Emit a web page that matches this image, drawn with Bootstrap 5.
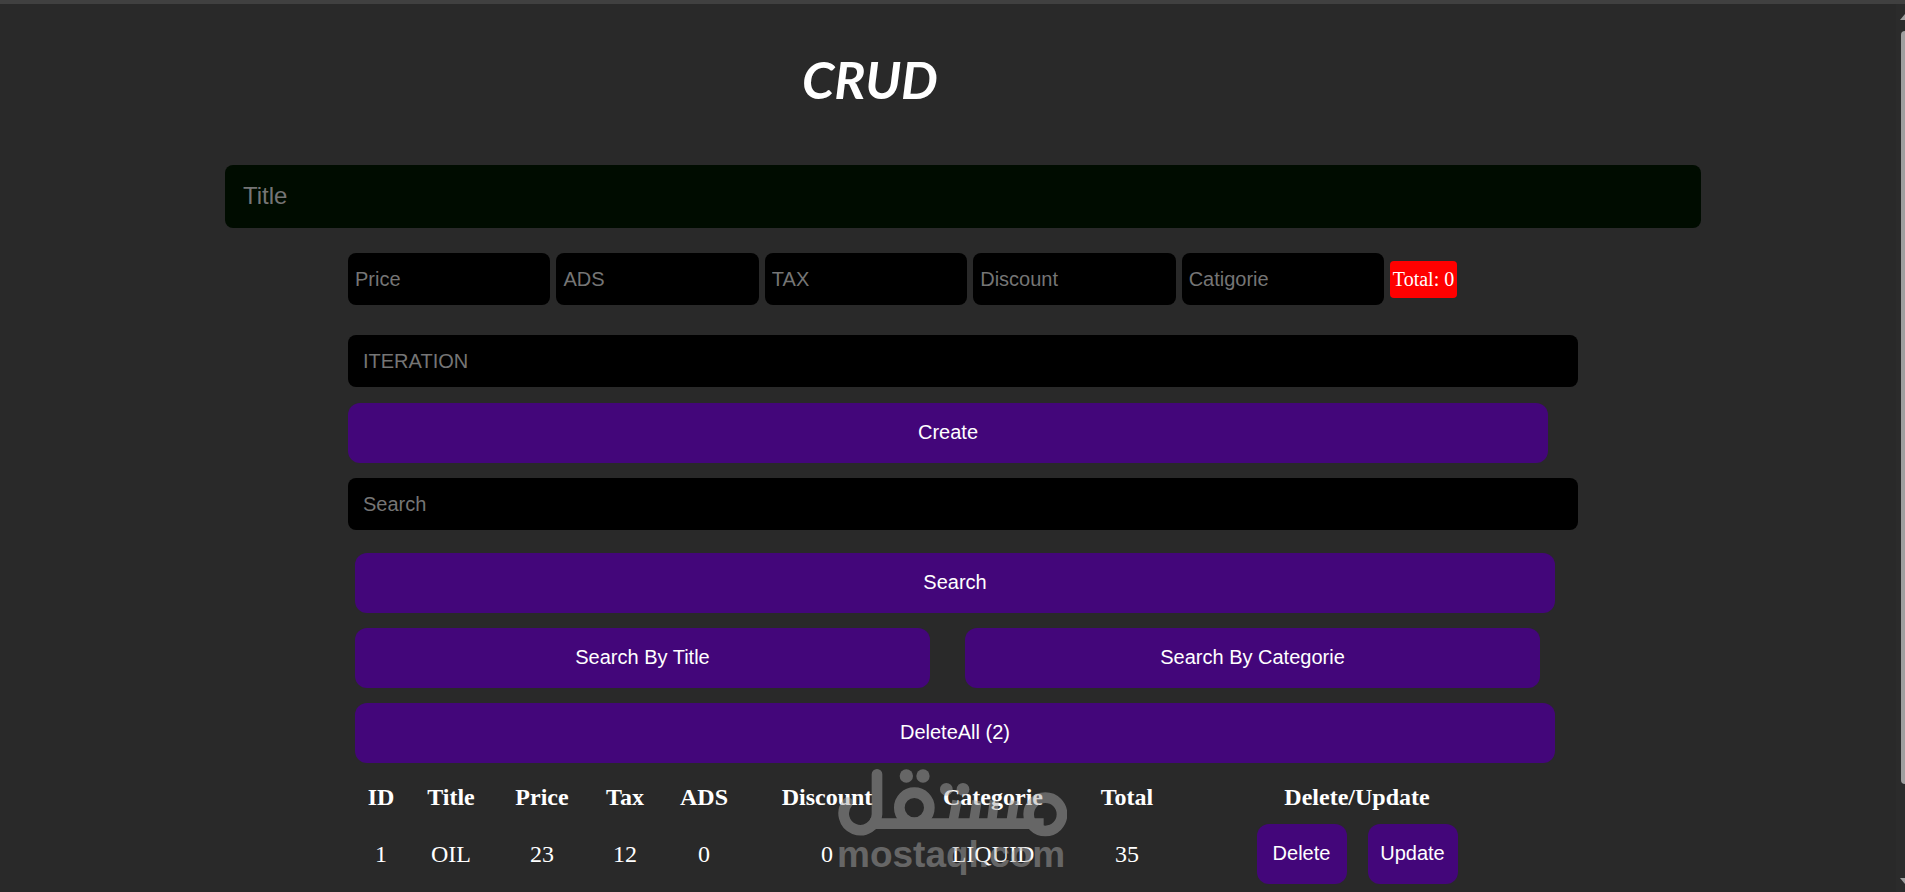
<!DOCTYPE html>
<html lang="en">
<head>
<meta charset="utf-8">
<meta name="viewport" content="width=device-width, initial-scale=1">
<title>CRUD</title>
<link href="https://cdn.jsdelivr.net/npm/bootstrap@5.3.0/dist/css/bootstrap.min.css" rel="stylesheet">
<script src="https://cdn.jsdelivr.net/npm/bootstrap@5.3.0/dist/js/bootstrap.bundle.min.js"></script>
<style>
  body { background: #292929; color: #fff; font-family: "Liberation Serif", serif; font-size: 20px; }
  .top-edge { height: 4px; background: #404040; }
  .page { padding-right: 9px; }
  .app { width: 100%; max-width: 1200px; }
  .app-title { font: italic 700 52px/68px Lato, sans-serif; padding: 41px 156px 52px 0; }
  .field { background: #000; color: #fff; border: 0; border-radius: 8px; font: 20px/24px "Liberation Sans", sans-serif; padding: 14px 7px; box-shadow: none; }
  .field:focus { background: #000; color: #fff; box-shadow: none; }
  .field::placeholder { color: #757575; opacity: 1; }
  .field-title, .field-title:focus { background: #000c00; }
  .field-title { font-size: 24px; line-height: 27px; padding: 17px 18px 19px; width: calc(100% + 276px); margin: 0 -153px 25px -123px; }
  .field-wide { width: calc(100% + 30px); padding: 14px 15px; }
  .prices { gap: 6px; margin-bottom: 30px; padding-right: 91px; }
  .prices .field { flex: 1 1 0; min-width: 0; }
  .total { background: #f00; border-radius: 4px; width: 67px; text-align: center; padding: 3px 0 4px; line-height: 30px; }
  .btn-main, .btn-main:hover { background: #43067a; color: #fff; }
  .btn-main { border: 0; border-radius: 12px; font: 20px/24px "Liberation Sans", sans-serif; padding: 17px 0 19px; }
  .create { margin: 16px 0 15px; }
  .searches { margin: 23px -7px 0 7px; gap: 15px; }
  .halves { gap: 35px; padding-right: 15px; }
  .items { table-layout: fixed; width: 1184px; margin-left: 7px; font-size: 24px; line-height: 28px; text-align: center; }
  .items th { padding: 20px 0 13px; }
  .items td { padding: 0; }
  .items .btn-main { width: 90px; }
  .watermark { left: 837px; top: 768px; color: #aaa; opacity: .48; pointer-events: none; }
  .watermark span { font: 700 37px/34px "Liberation Sans", sans-serif; }
  .scroll-strip { background: #2b2b2b; width: 9px; top: 4px; padding: 10px 0 8px; }
  .thumb { background: #9f9f9f; width: 4px; border-radius: 4px 0 0 4px; margin: 11px 0 94px; }
</style>
</head>
<body class="vh-100 overflow-hidden position-relative">
<div class="top-edge"></div>
<div class="page">
<main class="app mx-auto" id="app">
  <h1 class="app-title text-center m-0">CRUD</h1>
  <input class="field field-title d-block" type="text" placeholder="Title" aria-label="Title">
  <div class="prices d-flex align-items-center">
    <input class="field" type="text" placeholder="Price" aria-label="Price">
    <input class="field" type="text" placeholder="ADS" aria-label="ADS">
    <input class="field" type="text" placeholder="TAX" aria-label="TAX">
    <input class="field" type="text" placeholder="Discount" aria-label="Discount">
    <input class="field" type="text" placeholder="Catigorie" aria-label="Catigorie">
    <span class="total">Total: 0</span>
  </div>
  <input class="field field-wide d-block" type="text" placeholder="ITERATION" aria-label="Iteration">
  <button class="btn btn-main create w-100 d-block" type="button">Create</button>
  <input class="field field-wide d-block" type="text" placeholder="Search" aria-label="Search">
  <div class="searches d-flex flex-column">
    <button class="btn btn-main" type="button">Search</button>
    <div class="halves d-flex">
      <button class="btn btn-main flex-fill w-50" type="button">Search By Title</button>
      <button class="btn btn-main flex-fill w-50" type="button">Search By Categorie</button>
    </div>
    <button class="btn btn-main" type="button">DeleteAll (2)</button>
  </div>
  <table class="items">
    <colgroup>
      <col style="width:52px"><col style="width:88px"><col style="width:94px"><col style="width:72px"><col style="width:86px"><col style="width:160px"><col style="width:172px"><col style="width:96px"><col style="width:364px">
    </colgroup>
    <thead>
      <tr><th>ID</th><th>Title</th><th>Price</th><th>Tax</th><th>ADS</th><th>Discount</th><th>Categorie</th><th>Total</th><th>Delete/Update</th></tr>
    </thead>
    <tbody>
      <tr>
        <td>1</td><td>OIL</td><td>23</td><td>12</td><td>0</td><td>0</td><td>LIQUID</td><td>35</td>
        <td><div class="d-flex justify-content-center" style="gap:21px">
          <button class="btn btn-main" type="button">Delete</button>
          <button class="btn btn-main" type="button">Update</button>
        </div></td>
      </tr>
    </tbody>
  </table>
</main>
</div>

<div class="watermark position-absolute d-flex flex-column">
  <svg width="230" height="70" viewBox="20 24 690 210" fill="none" stroke="currentColor" stroke-width="32" aria-hidden="true">
    <path d="M52 128A50 50 0 1 0 140 163V43" stroke-linecap="round"/>
    <path d="M120 191H640"/>
    <circle cx="252" cy="143" r="45"/>
    <circle cx="645" cy="163" r="50"/>
    <path d="M380 122L368 185M440 122L430 185M492 122L484 185M552 122L542 185" stroke-width="28"/>
    <g fill="currentColor" stroke="none">
      <circle cx="228" cy="48" r="20"/><circle cx="278" cy="48" r="20"/>
      <circle cx="348" cy="88" r="19"/><circle cx="398" cy="88" r="19"/>
    </g>
  </svg>
  <span>mostaql.com</span>
</div>

<div class="scroll-strip position-absolute end-0 bottom-0 d-flex flex-column align-items-end" aria-hidden="true">
  <svg width="5" height="6" viewBox="0 0 5 6"><path d="M0 6L5 0V6Z" fill="#9f9f9f"/></svg>
  <div class="thumb flex-grow-1"></div>
  <svg width="5" height="6" viewBox="0 0 5 6"><path d="M0 0H5V6Z" fill="#9f9f9f"/></svg>
</div>
</body>
</html>
